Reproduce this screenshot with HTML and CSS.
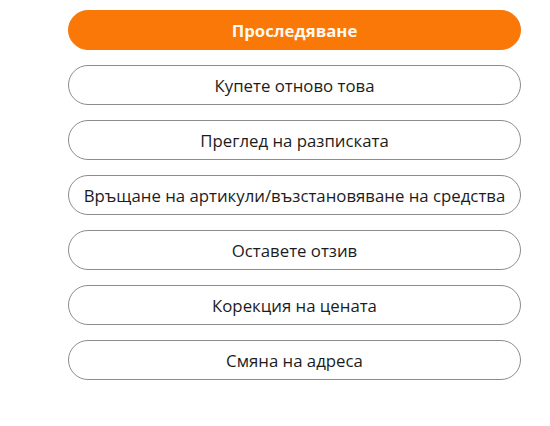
FILE: index.html
```html
<!DOCTYPE html>
<html lang="bg">
<head>
    <meta charset="UTF-8">
    <meta name="viewport" content="width=device-width, initial-scale=1.0">
    <title>Поръчка</title>
    <link rel="stylesheet" href="styles.css">
</head>
<body>

<!-- Действия за поръчката -->
<div class="order-actions">
    <button type="button" class="action-btn primary">Проследяване</button>
    <button type="button" class="action-btn">Купете отново това</button>
    <button type="button" class="action-btn">Преглед на разписката</button>
    <button type="button" class="action-btn">Връщане на артикули/възстановяване на средства</button>
    <button type="button" class="action-btn">Оставете отзив</button>
    <button type="button" class="action-btn">Корекция на цената</button>
    <button type="button" class="action-btn">Смяна на адреса</button>
</div>

</body>
</html>
```

FILE: styles.css
```css
/* основни стилове на страницата */
body {
    margin: 0;
    background-color: #ffffff;
    font-family: 'Open Sans', 'Noto Sans', sans-serif;
}

/* колона с бутони */
.order-actions {
    display: flex;
    flex-direction: column;
    gap: 15px;
    width: 453px;
    margin-left: 68px;
    padding-top: 10px;
}

/* бутон с контур */
.action-btn {
    box-sizing: border-box;
    height: 40px;
    padding: 0 2px;
    background-color: #ffffff;
    color: #1c1c1c;
    border: 1px solid #8c8c8c;
    border-radius: 20px;
    font-family: inherit;
    font-size: 16.8px;
    white-space: nowrap;
    cursor: pointer;
}

/* основният оранжев бутон */
.action-btn.primary {
    background-color: #f97808;
    border-color: #f97808;
    color: #fff8ee;
    font-weight: bold;
}
```
